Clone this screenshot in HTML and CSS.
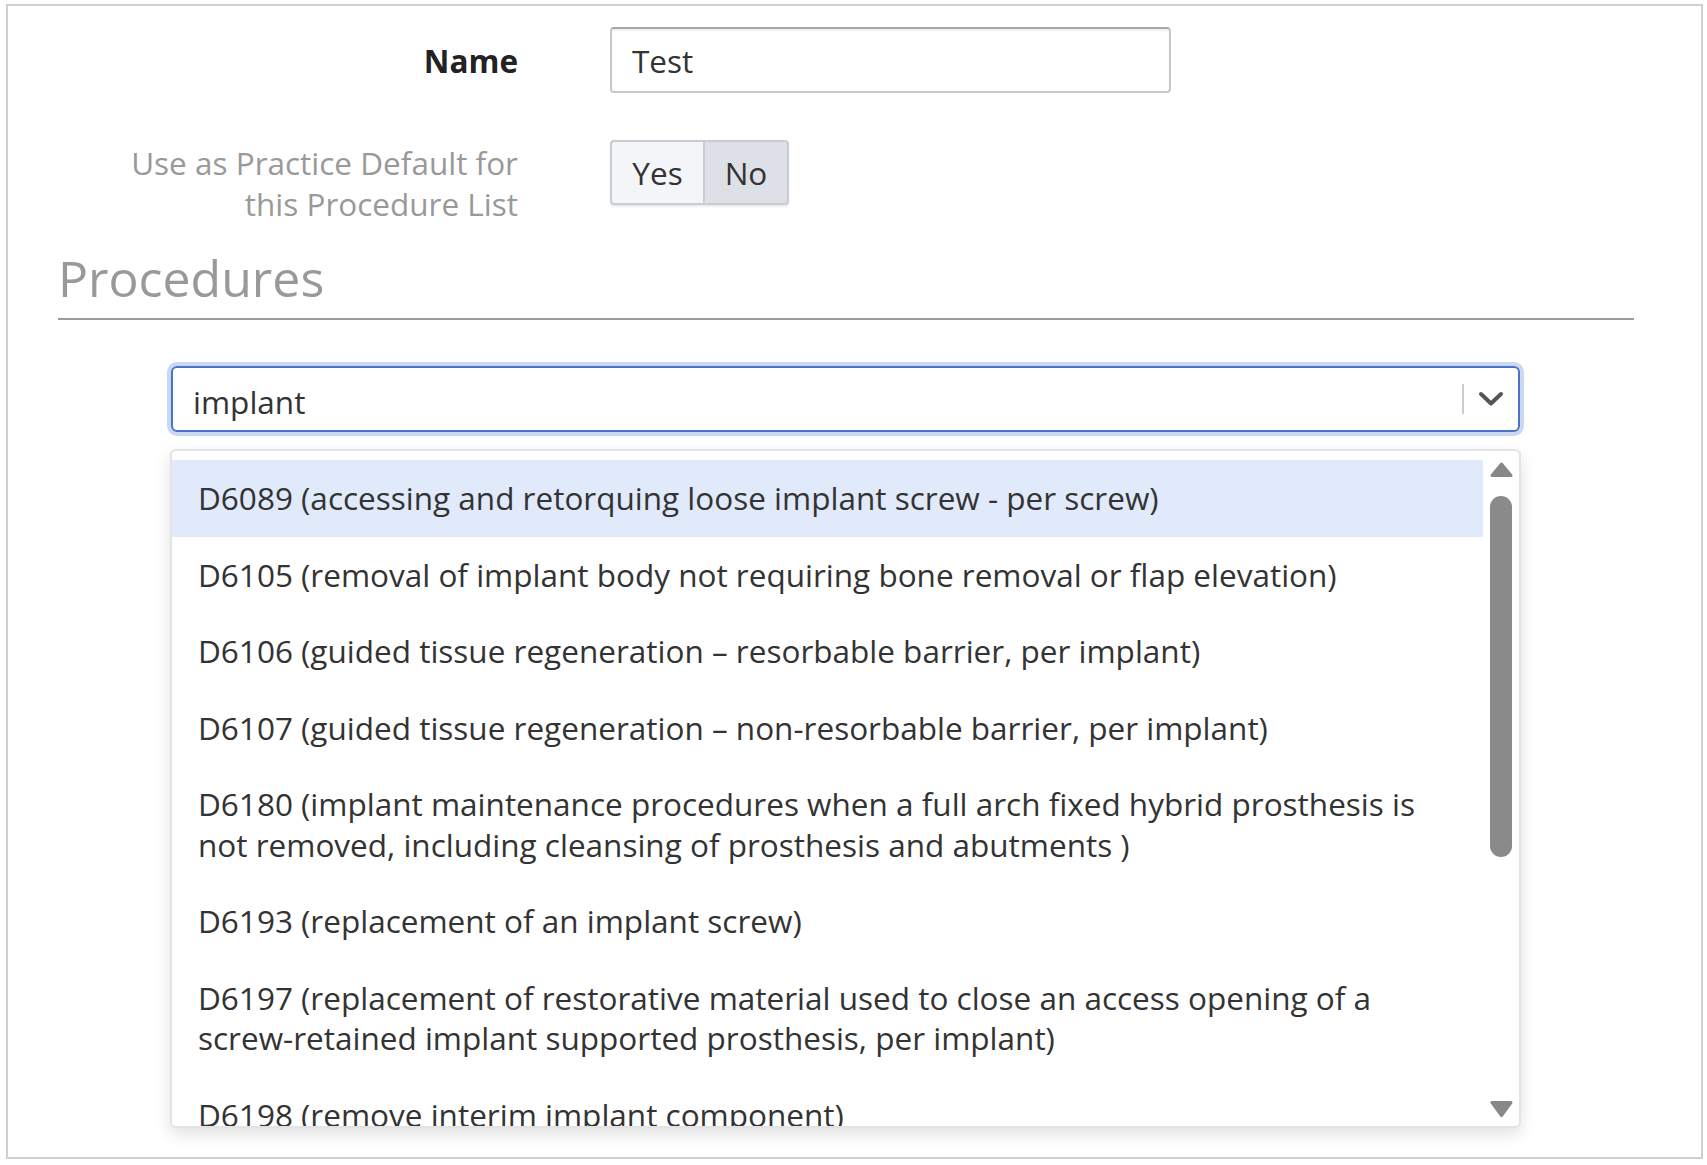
FILE: index.html
```html
<!DOCTYPE html>
<html lang="en">
<head>
<meta charset="utf-8">
<title>Procedure List</title>
<link rel="stylesheet" href="styles.css">
</head>
<body>
<div class="panel">
  <div class="form-row row-name">
    <label class="form-label label-strong">Name</label>
    <div class="form-control-wrap">
      <div class="text-input">Test</div>
    </div>
  </div>
  <div class="form-row row-default">
    <label class="form-label label-muted">Use as Practice Default for this Procedure List</label>
    <div class="toggle">
      <span class="toggle-btn toggle-yes">Yes</span>
      <span class="toggle-btn toggle-no">No</span>
    </div>
  </div>
  <section class="procedures">
    <h2 class="section-title">Procedures</h2>
    <hr class="section-rule">
    <div class="picker">
      <div class="select-box">
        <span class="select-value">implant</span>
        <span class="select-sep"></span>
        <span class="select-indicator">
          <svg width="26" height="16" viewBox="0 0 26 16"><path d="M3 3 L13 12.5 L23 3" fill="none" stroke="#555" stroke-width="4" stroke-linecap="round" stroke-linejoin="round"/></svg>
        </span>
      </div>
      <div class="menu">
        <ul class="menu-list">
          <li class="option option-active">D6089 (accessing and retorquing loose implant screw - per screw)</li>
          <li class="option">D6105 (removal of implant body not requiring bone removal or flap elevation)</li>
          <li class="option">D6106 (guided tissue regeneration – resorbable barrier, per implant)</li>
          <li class="option">D6107 (guided tissue regeneration – non-resorbable barrier, per implant)</li>
          <li class="option">D6180 (implant maintenance procedures when a full arch fixed hybrid prosthesis is not removed, including cleansing of prosthesis and abutments )</li>
          <li class="option">D6193 (replacement of an implant screw)</li>
          <li class="option">D6197 (replacement of restorative material used to close an access opening of a screw-retained implant supported prosthesis, per implant)</li>
          <li class="option">D6198 (remove interim implant component)</li>
        </ul>
        <div class="scrollbar">
          <svg class="scroll-arrow arrow-up" width="23" height="16" viewBox="0 0 23 16"><path d="M11.5 2 L21 13.5 L2 13.5 Z" fill="#888" stroke="#888" stroke-width="3" stroke-linejoin="round"/></svg>
          <div class="scroll-thumb"></div>
          <div class="scroll-space"></div>
          <svg class="scroll-arrow arrow-down" width="23" height="18" viewBox="0 0 23 18"><path d="M2 2.5 L21 2.5 L11.5 15.5 Z" fill="#888" stroke="#888" stroke-width="3" stroke-linejoin="round"/></svg>
        </div>
      </div>
    </div>
  </section>
</div>
</body>
</html>
```

FILE: styles.css
```css
* { box-sizing: border-box; }

html, body {
  margin: 0;
  padding: 0;
  background: #ffffff;
}

body {
  font-family: "Open Sans", "Noto Sans", "DejaVu Sans", sans-serif;
  color: #333333;
  font-size: 31.5px;
}

.panel {
  margin: 4px 0 0 6px;
  width: 1697px;
  height: 1155px;
  border: 2px solid #cfcfcf;
  padding-top: 21px;
  overflow: hidden;
}

.form-row {
  display: flex;
  gap: 92px;
}

.form-label {
  width: 510px;
  flex: none;
  padding-left: 85px;
  text-align: right;
  line-height: 40.5px;
}

.row-name {
  align-items: center;
  height: 66px;
}

.label-strong {
  font-weight: 700;
  color: #222222;
  padding-top: 2px;
}

.text-input {
  width: 561px;
  height: 66px;
  border: 2px solid #c8c8c8;
  border-top-color: #a8a8a8;
  border-radius: 4px;
  box-shadow: inset 0 2px 2px rgba(0, 0, 0, 0.06);
  padding: 2px 20px 0 20px;
  line-height: 60px;
  color: #333333;
}

.row-default {
  margin-top: 47px;
  align-items: flex-start;
}

.label-muted {
  color: #999999;
  margin-top: 3px;
}

.toggle {
  display: flex;
  height: 65px;
  border-radius: 4px;
  box-shadow: 0 2px 2px rgba(0, 0, 0, 0.08);
}

.toggle-btn {
  display: flex;
  align-items: center;
  justify-content: center;
  height: 65px;
  border: 2px solid #c9ccd1;
  color: #333333;
}

.toggle-yes {
  width: 93px;
  background: #f4f5f8;
  border-right: none;
  border-radius: 4px 0 0 4px;
}

.toggle-no {
  width: 86px;
  background: #dde0e6;
  border-radius: 0 4px 4px 0;
}

.procedures {
  margin: 20px 0 0 50px;
  width: 1576px;
}

.section-title {
  margin: 0;
  font-size: 50px;
  font-weight: 400;
  line-height: 68px;
  color: #999999;
}

.section-rule {
  margin: 6px 0 0 0;
  border: none;
  height: 2px;
  background: #9a9a9a;
}

.picker {
  margin: 46px 0 0 112px;
  width: 1351px;
}

.select-box {
  display: flex;
  align-items: center;
  margin-left: 1px;
  width: 1349px;
  height: 66px;
  border: 2px solid #4a72c6;
  border-radius: 6px;
  box-shadow: 0 0 0 4px #cbd8f2;
}

.select-value {
  flex: 1;
  padding: 4px 0 0 20px;
  color: #333333;
}

.select-sep {
  width: 2px;
  height: 30px;
  background: #cccccc;
}

.select-indicator {
  display: flex;
  align-items: center;
  justify-content: center;
  width: 54px;
  height: 100%;
}

.menu {
  display: flex;
  margin-top: 17px;
  height: 679px;
  border: 2px solid #e3e3e3;
  border-radius: 6px;
  box-shadow: 0 6px 16px rgba(0, 0, 0, 0.12);
  background: #ffffff;
  overflow: hidden;
}

.menu-list {
  list-style: none;
  margin: 0;
  padding: 9px 0 0 0;
  width: 1311px;
  flex: none;
  overflow: hidden;
}

.option {
  padding: 18px 26px 18px 26px;
  line-height: 40.5px;
  color: #333333;
}

.option-active {
  background: #e1eafb;
}

.scrollbar {
  flex: 1;
  display: flex;
  flex-direction: column;
  align-items: center;
  padding: 11px 0 8px 0;
}

.scroll-arrow {
  display: block;
  flex: none;
}

.scroll-thumb {
  margin-top: 18px;
  width: 22px;
  height: 361px;
  border-radius: 11px;
  background: #8a8a8a;
  flex: none;
}

.scroll-space {
  flex: 1;
}
```
